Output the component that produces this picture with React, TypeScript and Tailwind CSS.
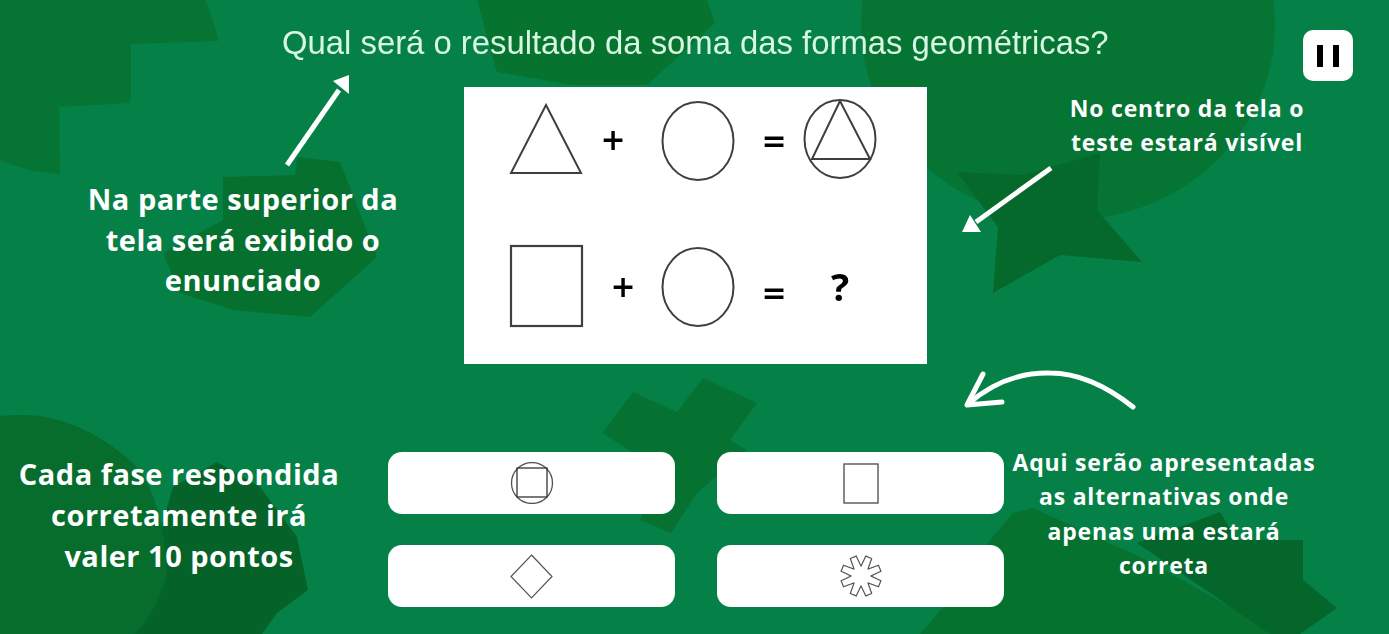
import React from 'react';

const SPOKES = Array.from({ length: 8 }, (_, i) => 22.5 + i * 45);

// outline of the eight-spoked answer shape
const spokePath = () => {
  const pt = (deg: number, r: number) => {
    const a = ((deg - 90) * Math.PI) / 180;
    return `${(21 + r * Math.cos(a)).toFixed(1)} ${(22 + r * Math.sin(a)).toFixed(1)}`;
  };
  const parts = SPOKES.map(
    (d) => `L${pt(d - 22, 10)} L${pt(d - 9, 20.5)} L${pt(d + 9, 20.5)} L${pt(d + 22, 10)}`
  );
  return 'M' + parts.join(' ').slice(1) + ' Z';
};

const Background = () => (
  <svg className="absolute inset-0" width="1389" height="634" viewBox="0 0 1389 634" aria-hidden="true">
    <path d="M0 0 L205 0 Q214 18 218 41 L131 44 L131 103 L59 107 L60 174 Q25 172 0 160 Z" fill="#067533" />
    <path d="M297 157 L340 162 L377 257 L310 317 L233 310 L180 293 L163 253 L223 220 L223 177 L295 175 Z" fill="#06712f" />
    <path d="M477 0 L707 0 L715 23 L647 85 L573 85 L497 72 Z" fill="#06732f" />
    <ellipse cx="1068" cy="25" rx="207" ry="195" fill="#067533" />
    <path d="M957 172 L1023 175 L1100 153 L1097 210 L1142 262 L1060 255 L993 293 L998 227 Z" fill="#05692c" />
    <path d="M633 392 L677 412 L703 378 L757 403 L730 440 L747 450 L697 493 L671 533 L640 520 L660 470 L602 433 Z" fill="#067231" />
    <path d="M920 634 L943 607 L990 540 L1013 513 L1033 508 L1140 557 L1280 634 Z" fill="#067230" />
    <path d="M1137 543 L1220 512 L1237 540 L1303 540 L1303 580 L1337 608 L1300 634 L1270 634 Z" fill="#05662b" />
    <path d="M173 487 L217 462 L260 487 L297 537 L308 590 L277 613 L262 634 L130 634 Z" fill="#05632a" />
    <path d="M0 416 Q20 414 40 416 Q90 424 133 463 Q163 495 167 573 Q160 605 135 634 L0 634 Z" fill="#066d2d" />
  </svg>
);

const Arrows = () => (
  <svg className="absolute inset-0 pointer-events-none" width="1389" height="634" viewBox="0 0 1389 634" aria-hidden="true">
    <path d="M287 165 L339 90" stroke="#fff" strokeWidth="5" fill="none" />
    <path d="M349 75 L333 81 L349 94 Z" fill="#fff" />
    <path d="M1051 168 L976 222" stroke="#fff" strokeWidth="5" fill="none" />
    <path d="M962 232 L970 215 L981 232 Z" fill="#fff" />
    <path d="M1133 407 Q1090 373 1050 373 Q1005 372 968 404" stroke="#fff" strokeWidth="5" strokeLinecap="round" fill="none" />
    <path d="M983 374 L967 405 L1002 402" stroke="#fff" strokeWidth="5" strokeLinecap="round" strokeLinejoin="round" fill="none" />
  </svg>
);

const PuzzleFigure = () => (
  <svg className="blur-[0.3px]" width="463" height="277" viewBox="0 0 463 277" fill="none" stroke="#3f3f3f" strokeWidth="2">
    <path d="M82 18 L47 86 L117 86 Z" />
    <ellipse cx="234" cy="54" rx="35.5" ry="39" />
    <ellipse cx="376" cy="52" rx="35.5" ry="39" />
    <path d="M376 14 L348 72 L406 72 Z" />
    <rect x="47" y="159" width="71" height="80" strokeWidth="2.2" />
    <ellipse cx="234" cy="200" rx="35.5" ry="39" />
    <g fill="#000" stroke="none" textAnchor="middle" fontFamily="'DejaVu Sans', sans-serif" fontWeight="700" fontSize="30">
      <text x="149" y="63">+</text>
      <text x="310" y="64">=</text>
      <text x="159" y="210">+</text>
      <text x="310" y="216">=</text>
      <text x="376" y="214" fontSize="38" fontFamily="'Open Sans', sans-serif" fontWeight="700">?</text>
    </g>
  </svg>
);

const AnswerCard = ({ children }: { children: React.ReactNode }) => (
  <div className="h-[62px] rounded-[14px] bg-white flex items-center justify-center">{children}</div>
);

export default function App() {
  return (
    <div className="relative w-[1389px] h-[634px] overflow-hidden bg-[#058147] font-['Open_Sans',sans-serif] text-white">
      <Background />

      <div className="relative">
        {/* enunciado */}
        <div className="h-[87px] flex justify-between pl-[282px] pr-[36px]">
          <h1 className="pt-[25px] font-['Liberation_Sans',sans-serif] text-[32.85px] leading-[36px] text-[#d8f7e2] font-normal blur-[0.3px]">
            Qual será o resultado da soma das formas geométricas?
          </h1>
          <button className="mt-[30px] w-[50px] h-[51px] rounded-[10px] bg-white flex items-center justify-center gap-[10px]">
            <span className="w-[6px] h-[22px] bg-black" />
            <span className="w-[6px] h-[22px] bg-black" />
          </button>
        </div>

        <div className="h-[365px] flex">
          <div className="w-[464px] pt-[92px]">
            <p className="ml-[73px] w-[340px] text-center text-[29px] leading-[40.5px] font-bold tracking-[0.5px]">
              Na parte superior da
              <br />
              tela será exibido o
              <br />
              enunciado
            </p>
          </div>
          <div className="w-[463px] h-[277px] bg-white">
            <PuzzleFigure />
          </div>
          <div className="w-[462px] pt-[4px]">
            <p className="ml-[90px] w-[340px] text-center text-[23px] leading-[34.4px] font-bold tracking-[0.8px]">
              No centro da tela o
              <br />
              teste estará visível
            </p>
          </div>
        </div>

        <div className="flex">
          <div className="w-[388px] pt-[1px]">
            <p className="w-[358px] text-center text-[29px] leading-[41px] font-bold tracking-[0.5px]">
              Cada fase respondida
              <br />
              corretamente irá
              <br />
              valer 10 pontos
            </p>
          </div>
          <div className="w-[616px] grid grid-cols-2 gap-x-[42px] gap-y-[31px] h-[155px]">
            <AnswerCard>
              <svg width="44" height="42" viewBox="0 0 44 42" fill="none" stroke="#555" strokeWidth="1.3">
                <circle cx="22" cy="21" r="20.5" />
                <rect x="7" y="6" width="30" height="29" stroke="#333" />
              </svg>
            </AnswerCard>
            <AnswerCard>
              <svg width="36" height="41" viewBox="0 0 36 41" fill="none" stroke="#555" strokeWidth="1.4">
                <rect x="1" y="1" width="34" height="39" />
              </svg>
            </AnswerCard>
            <AnswerCard>
              <svg width="43" height="45" viewBox="0 0 43 45" fill="none" stroke="#555" strokeWidth="1.2">
                <path d="M21.5 1 L42 22.5 L21.5 44 L1 22.5 Z" />
              </svg>
            </AnswerCard>
            <AnswerCard>
              <svg width="42" height="44" viewBox="0 0 42 44" fill="none" stroke="#555" strokeWidth="1.2">
                <path d={spokePath()} />
              </svg>
            </AnswerCard>
          </div>
          <div className="w-[322px] -ml-[1px] -mt-[7px]">
            <p className="text-center text-[23px] leading-[34.4px] font-bold tracking-[0.8px]">
              Aqui serão apresentadas
              <br />
              as alternativas onde
              <br />
              apenas uma estará
              <br />
              correta
            </p>
          </div>
        </div>
      </div>

      <Arrows />
    </div>
  );
}
